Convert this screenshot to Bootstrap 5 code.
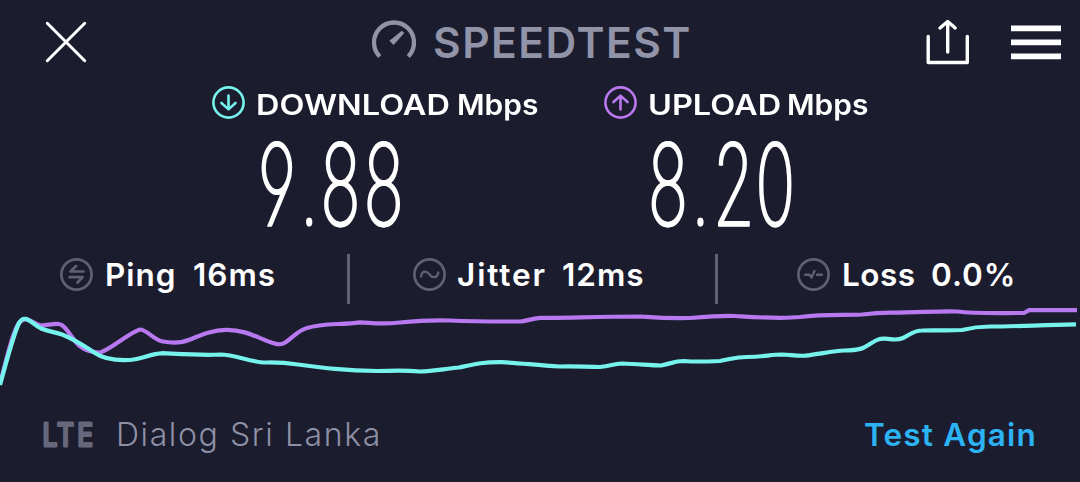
<!DOCTYPE html>
<html lang="en">
<head>
<meta charset="utf-8">
<meta name="viewport" content="width=device-width, initial-scale=1">
<title>Speedtest</title>
<link href="https://cdn.jsdelivr.net/npm/bootstrap@5.3.0/dist/css/bootstrap.min.css" rel="stylesheet">
<style>
  body { background: #1b1c2e; color: #fff; font-family: Inter, "Liberation Sans", sans-serif; height: 482px; overflow: hidden; }
  svg { display: block; flex: none; fill: none; }
  .screen { width: 1080px; height: 482px; }
  .txt { line-height: 1; white-space: nowrap; display: block; flex: none; }
  .top-bar { height: 84px; padding: 0 19px 0 45px; }
  .brand { color: #9193a8; margin-left: 285px; width: 554px; gap: 17px; }
  .brand .txt { font-size: 42.5px; font-weight: 600; letter-spacing: 1.5px; padding-top: 3px; }
  .icon-btn { background: none; border: 0; padding: 0; }
  .labels { height: 37px; padding-left: 212px; }
  .metric { width: 392px; }
  .metric .txt { font-size: 28.5px; font-weight: 600; padding-top: 5px; transform-origin: 0 50%; }
  .metric .name { margin-left: 11px; transform: scaleX(1.14); }
  .metric .unit { transform: scaleX(1.05); }
  .digits { overflow: visible; filter: drop-shadow(1px 0 0 #fff); font-feature-settings: "cv04"; }
  .stats { height: 60px; padding: 10px 0 0 60px; }
  .stat { height: 41px; gap: 12px; }
  .stat .txt { font-size: 31.5px; font-weight: 600; letter-spacing: 1px; }
  .rule { width: 3px; height: 50px; background: #5f6076; flex: none; }
  .footer-bar { height: 70px; padding: 0 43px 0 43px; }
  .network { overflow: visible; }
  .carrier { font-size: 32px; font-weight: 300; color: #8e90a5; letter-spacing: 1.6px; }
  .again { font-size: 31.5px; font-weight: 600; color: #2bb3f3; text-decoration: none; letter-spacing: 1.2px; }
  .muted-stroke { stroke: #5f6076; }
</style>
</head>
<body>
<main class="screen d-flex flex-column">
  <header class="top-bar d-flex align-items-center">
    <button class="icon-btn" aria-label="Close"><svg width="42" height="42" stroke="#fff" stroke-width="3" stroke-linecap="round"><path d="M2.3 2.3 39.7 39.7M39.7 2.3 2.3 39.7"/></svg></button>
    <div class="brand d-flex align-items-center">
      <svg width="44" height="44" viewBox="0 0 44 44"><path d="M7.7 37.2a20 20 0 1 1 28.6 0" transform="translate(0 -.7)" stroke="#9193a8" stroke-width="4.3"/><path d="m29.8 10.7 2.5 2.4L21.6 25.1 17.4 20.8z" fill="#9193a8"/></svg>
      <span class="txt">SPEEDTEST</span>
    </div>
    <button class="icon-btn" aria-label="Share"><svg width="44" height="46" stroke="#fff" stroke-width="3.4" stroke-linecap="round" stroke-linejoin="round"><path d="M2.2 17.500V43.5H41.3V17.500M21.7 33V3.500M14 9 21.7 2.500 29.2 9"/></svg></button>
    <button class="icon-btn ms-auto" aria-label="Menu"><svg width="50" height="35"><path d="M0 3.300H50M0 17.300H50M0 31.300H50" stroke="#fff" stroke-width="5.800"/></svg></button>
  </header>

  <section class="labels d-flex align-items-center">
    <div class="metric d-flex align-items-center">
      <svg width="33" height="33" stroke="#77f3ee" stroke-width="2.6" stroke-linecap="round" stroke-linejoin="round"><circle cx="16.5" cy="16.5" r="15.1"/><path d="M16.5 9.5V23M9.5 17 16.5 23.4 23.5 17"/></svg>
      <span class="txt name" style="width:201px">DOWNLOAD</span><span class="txt unit">Mbps</span>
    </div>
    <div class="metric d-flex align-items-center">
      <svg width="33" height="33" stroke="#bc79ef" stroke-width="2.6" stroke-linecap="round" stroke-linejoin="round"><circle cx="16.5" cy="16.5" r="15.1"/><path d="M16.5 23.5V10M9.5 16 16.5 9.6 23.5 16"/></svg>
      <span class="txt name" style="width:139px">UPLOAD</span><span class="txt unit">Mbps</span>
    </div>
  </section>

  <svg class="digits" width="1080" height="123" viewBox="0 121 1080 123" stroke="#fff" stroke-width="3" font-family="Inter" font-weight="100" font-size="112">
    <text fill="#fff" transform="translate(0 225) scale(.59 1)" x="437 508 543 616" y="0">9.88</text>
    <text fill="#fff" transform="translate(0 225) scale(.59 1)" x="1098 1171 1208 1280" y="0">8.20</text>
  </svg>

  <section class="stats d-flex align-items-start">
    <div class="stat d-flex align-items-center" style="width:287px">
      <svg class="muted-stroke" width="33" height="33" stroke-width="2.7" stroke-linecap="round" stroke-linejoin="round"><circle cx="16.5" cy="16.5" r="15.1"/><path d="M23.5 13.5H10.5L16 8M9.5 19.2H22.5L17.500 24.5"/></svg>
      <span class="txt" style="width:76px">Ping</span><span class="txt">16ms</span>
    </div>
    <div class="rule"></div>
    <div class="stat d-flex align-items-center" style="width:365px;padding-left:63px">
      <svg class="muted-stroke" width="33" height="33" stroke-width="2.3" stroke-linecap="round"><circle cx="16.5" cy="16.5" r="15.1" stroke-width="2.7"/><path d="M8 18.5C9 12.5 13.5 12.5 16.5 16.5S24.5 20 25.3 14.5"/></svg>
      <span class="txt" style="width:93px;letter-spacing:1.9px;margin-left:-1px">Jitter</span><span class="txt">12ms</span>
    </div>
    <div class="rule"></div>
    <div class="stat d-flex align-items-center" style="padding-left:79px">
      <svg class="muted-stroke" width="33" height="33" stroke-width="2.4" stroke-linecap="round" stroke-linejoin="round"><circle cx="16.5" cy="16.5" r="15.1" stroke-width="2.7"/><path d="M8.2 16.8H12.5L14.5 19.5 17.5 13M20 16.8H25"/></svg>
      <span class="txt" style="width:77px;letter-spacing:.5px">Loss</span><span class="txt">0.0%</span>
    </div>
  </section>

  <svg width="1080" height="96" viewBox="0 304 1080 96" stroke-width="4.2" stroke-linejoin="round">
    <path stroke="#b878f0" d="M0 384C7 357 13 331 19 323C26 314 33 324 41 325.500C49 325 53 323.500 59 324C66 325 71 338 79 345.500C86 351 93 352.500 100 352.500C110 350 130 332 140 329.500C146 329 155 341 163 341.500C174 343.500 183 342.500 190 339.500C202 334.500 213 329.800 226 329.800C245 329.500 258 338 270 342C277 344.500 281 345.500 286 342C294 336 299 330 307 328C323 323 340 325 360 322.300C374 323 381 324.500 400 322.500C420 320.500 435 320 450 320.500C475 321.500 500 321.500 521 321.500C530 320 534 318 541 317.800C565 318.500 590 316.500 642 316.500C655 317.500 663 318.500 690 318C708 316.500 722 315.500 735 316C760 317.500 780 319 800 317C825 313.800 843 315.500 862 314.500C875 313 879 312.800 892 312.700C920 312.500 938 311 957 311.500C973 313.500 985 313 1024 313L1029 310.200H1077"/>
    <path stroke="#77f3ee" d="M0 385C8 356 13 336 19 323C25 313 31 323 41 328.500C50 332 55 332 62 334.500C76 340 84 346 95 353C105 360 120 360.500 130 360C144 359 149 354 163 353.200C180 354 202 355.500 220 354.500C235 354.500 247 361 263 362.500C275 362.500 281 362 298 364.500C324 368 344 370.700 378 371C390 371 403 370 419 371.500C435 371 443 369 459 367.500C475 364 482 362 502 362.200C520 363 535 365 560 366.500C578 366 585 367 600 367C611 366 613 364 622 363.500C640 364 649 365.500 661 365.500C670 364 674 361 684 361C695 362 708 361.500 720 361C732 359 735 357 747 357C764 357 770 354.500 782 354.500C792 355 796 356 805 355.700C820 354 833 351 844 350.500C852 350 858 350.500 864 347.500C874 342 876 338.500 885 338.700C892 339 896 341 903 338C910 334.500 914 330.500 922 330.500C937 330 947 331 962 330C974 327 979 326.500 990 326.500C1010 326.500 1030 325.500 1076 324.300"/>
  </svg>

  <footer class="footer-bar d-flex align-items-center">
    <svg class="network" width="73" height="42" viewBox="43 413 73 42" font-family="Inter" font-weight="400" font-size="31" stroke="#66677b" stroke-width="3" stroke-linejoin="round"><text fill="#66677b" transform="translate(0 444.500) scale(.85 1)" x="50 67 91" y="0">LTE</text></svg>
    <span class="txt carrier">Dialog Sri Lanka</span>
    <a class="txt again ms-auto" href="#">Test Again</a>
  </footer>
</main>
<script src="https://cdn.jsdelivr.net/npm/bootstrap@5.3.0/dist/js/bootstrap.bundle.min.js"></script>
</body>
</html>
